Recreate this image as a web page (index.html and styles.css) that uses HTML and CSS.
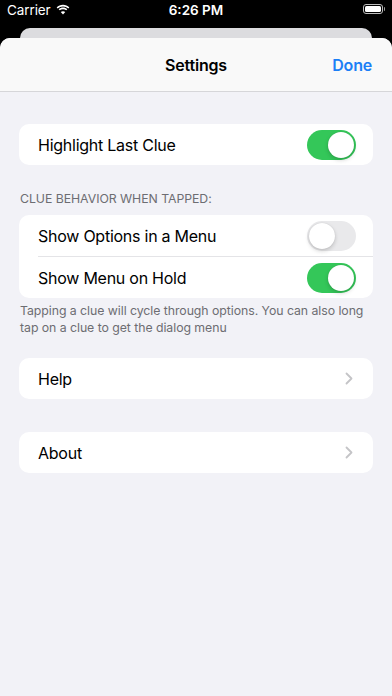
FILE: index.html
```html
<!DOCTYPE html>
<html>
<head>
<meta charset="utf-8">
<link rel="stylesheet" href="styles.css">
</head>
<body>
<div class="screen">
  <div class="status">
    <div class="status-left">
      <span class="carrier">Carrier</span>
      <svg class="wifi" width="14" height="11" viewBox="0 0 13 10">
        <path d="M6.5 2.2c1.9 0 3.6.7 4.9 1.9l1-1C10.8 1.6 8.8.7 6.5.7S2.2 1.6.6 3.1l1 1C2.9 2.9 4.6 2.2 6.5 2.2z" fill="#fff"/>
        <path d="M6.5 4.7c1.2 0 2.2.4 3 1.1l1-1C9.4 3.8 8 3.2 6.5 3.2S3.6 3.8 2.5 4.8l1 1c.8-.7 1.8-1.1 3-1.1z" fill="#fff"/>
        <path d="M6.5 9.6 8.6 7.4C8 6.9 7.3 6.6 6.5 6.6s-1.5.3-2.1.8z" fill="#fff"/>
      </svg>
    </div>
    <div class="time">6:26 PM</div>
    <div class="battery"><div class="batt-body"><div class="batt-fill"></div></div><div class="batt-tip"></div></div>
  </div>
  <div class="behind"></div>
  <div class="sheet">
    <div class="nav">
      <div class="nav-title">Settings</div>
      <div class="nav-done">Done</div>
    </div>
    <div class="content">
      <div class="card first">
        <div class="row">
          <span class="label">Highlight Last Clue</span>
          <span class="toggle on"><span class="knob"></span></span>
        </div>
      </div>
      <div class="sec-header">CLUE BEHAVIOR WHEN TAPPED:</div>
      <div class="card">
        <div class="row sep">
          <span class="label">Show Options in a Menu</span>
          <span class="toggle"><span class="knob"></span></span>
        </div>
        <div class="row">
          <span class="label">Show Menu on Hold</span>
          <span class="toggle on"><span class="knob"></span></span>
        </div>
      </div>
      <div class="sec-footer">Tapping a clue will cycle through options. You can also long tap on a clue to get the dialog menu</div>
      <div class="card help">
        <div class="row">
          <span class="label">Help</span>
          <svg class="chev" width="8" height="13" viewBox="0 0 8 13"><path d="M1.5 1.5 6.5 6.5 1.5 11.5" fill="none" stroke="#c4c4c7" stroke-width="1.8" stroke-linecap="round" stroke-linejoin="round"/></svg>
        </div>
      </div>
      <div class="card about">
        <div class="row">
          <span class="label">About</span>
          <svg class="chev" width="8" height="13" viewBox="0 0 8 13"><path d="M1.5 1.5 6.5 6.5 1.5 11.5" fill="none" stroke="#c4c4c7" stroke-width="1.8" stroke-linecap="round" stroke-linejoin="round"/></svg>
        </div>
      </div>
    </div>
  </div>
</div>
</body>
</html>
```
FILE: styles.css
```css
html, body {
  margin: 0;
  padding: 0;
  background: #000;
}
.screen {
  width: 392px;
  height: 696px;
  display: flex;
  flex-direction: column;
  font-family: Inter, "Liberation Sans", sans-serif;
  overflow: hidden;
}
.status {
  height: 28px;
  display: flex;
  align-items: flex-start;
  justify-content: space-between;
  position: relative;
  color: #fff;
  flex: none;
}
.status-left {
  display: flex;
  align-items: center;
  gap: 5px;
  padding-left: 7px;
  height: 20px;
}
.carrier {
  font-size: 13.5px;
  letter-spacing: -0.1px;
}
.wifi {
  margin-top: -1px;
}
.time {
  position: absolute;
  left: 0;
  right: 0;
  top: 0;
  height: 20px;
  line-height: 20px;
  text-align: center;
  font-size: 13.5px;
  font-weight: 600;
}
.battery {
  display: flex;
  align-items: center;
  padding-right: 7px;
  height: 20px;
  margin-top: -1px;
}
.batt-body {
  border: 1px solid #bdbdbd;
  border-radius: 3px;
  padding: 1px;
  box-sizing: border-box;
  width: 20px;
  height: 10px;
}
.batt-fill {
  width: 100%;
  height: 100%;
  background: #fff;
  border-radius: 1.5px;
}
.batt-tip {
  width: 1.5px;
  height: 4px;
  background: #9a9a9a;
  border-radius: 0 1px 1px 0;
  margin-left: 1px;
}
.behind {
  flex: none;
  height: 10px;
  margin: 0 20px;
  background: #dcdcdf;
  border-radius: 10px 10px 0 0;
}
.sheet {
  flex: 1;
  background: #f2f2f7;
  border-radius: 10px 10px 0 0;
  overflow: hidden;
}
.nav {
  background: #f9f9f9;
  border-bottom: 1px solid #d6d6d9;
  display: flex;
  align-items: center;
  justify-content: center;
  position: relative;
  box-sizing: border-box;
  height: 54px;
}
.nav-title {
  font-size: 16px;
  font-weight: 600;
  color: #000;
  letter-spacing: -0.2px;
}
.nav-done {
  position: absolute;
  right: 20px;
  top: 0;
  bottom: 0;
  display: flex;
  align-items: center;
  font-size: 16px;
  font-weight: 600;
  color: #1b7ff6;
  letter-spacing: -0.2px;
}
.content {
  padding: 32px 19px 0;
  display: flex;
  flex-direction: column;
}
.card {
  background: #fff;
  border-radius: 10px;
  overflow: hidden;
}
.row {
  height: 41px;
  display: flex;
  align-items: center;
  justify-content: space-between;
  padding: 0 17px 0 19px;
  position: relative;
}
.row.sep::after {
  content: "";
  position: absolute;
  left: 19px;
  right: 0;
  bottom: 0;
  height: 1px;
  background: #e4e4e7;
}
.row.sep {
  height: 42px;
}
.label {
  font-size: 16px;
  color: #000;
  letter-spacing: -0.25px;
}
.toggle {
  width: 49px;
  height: 30px;
  border-radius: 15px;
  background: #e9e9eb;
  position: relative;
  box-sizing: border-box;
  flex: none;
}
.toggle .knob {
  position: absolute;
  top: 2px;
  left: 2px;
  width: 26px;
  height: 26px;
  border-radius: 50%;
  background: #fff;
  box-shadow: 0 2px 4px rgba(0,0,0,0.18), 0 0 1px rgba(0,0,0,0.15);
}
.toggle.on {
  background: #34c759;
}
.toggle.on .knob {
  left: 21px;
}
.sec-header {
  margin: 26px 0 8px;
  padding-left: 1px;
  font-size: 12.3px;
  line-height: 16px;
  color: #6d6d72;
  letter-spacing: -0.05px;
}
.sec-footer {
  padding: 4px 0 0 1px;
  font-size: 12.3px;
  line-height: 17px;
  color: #6d6d72;
  letter-spacing: -0.05px;
}
.help {
  margin-top: 22px;
}
.about {
  margin-top: 33px;
}
.chev {
  margin-right: 3px;
}
```
